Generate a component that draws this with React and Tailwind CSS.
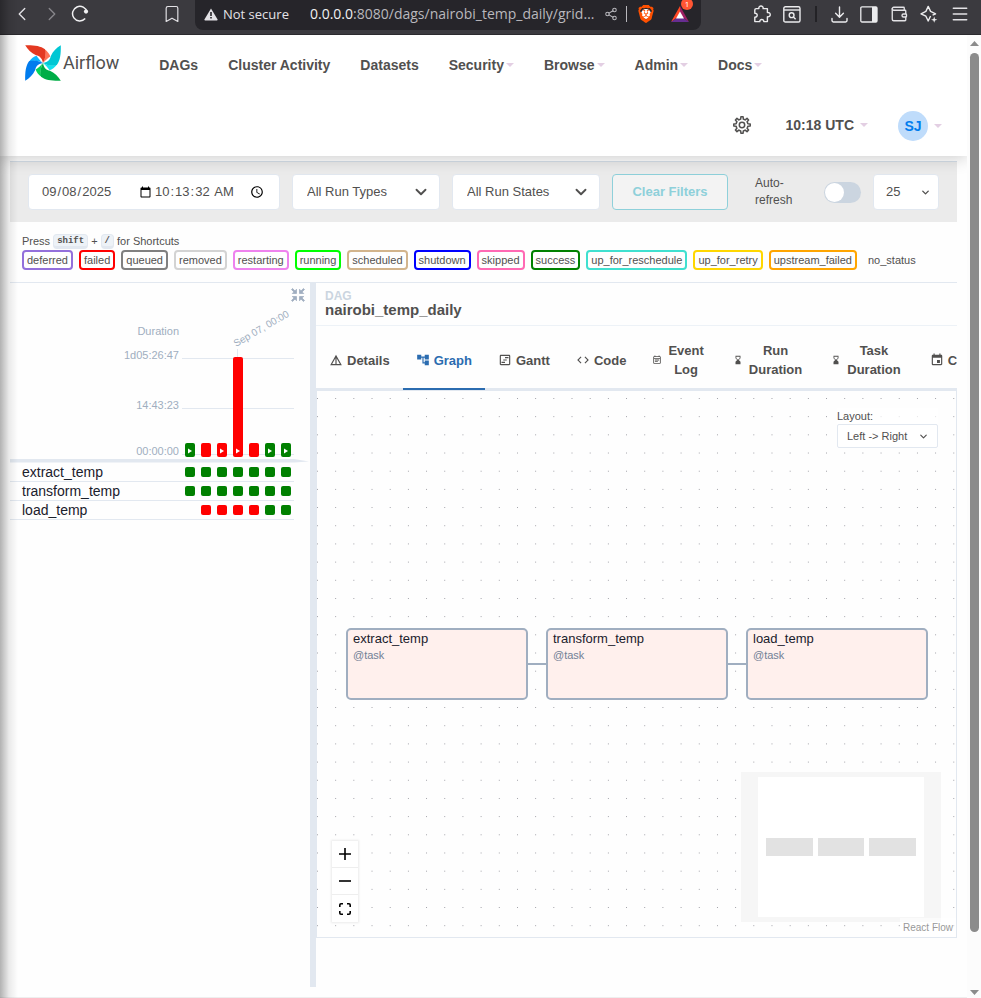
import React from "react";
import {
  ChevronLeft,
  ChevronRight,
  ChevronDown,
  Bookmark,
  Share2,
  Wallet,
  Menu,
} from "lucide-react";
import {
  MdDetails,
  MdAccountTree,
  MdOutlineViewTimeline,
  MdCode,
  MdOutlineEventNote,
  MdHourglassBottom,
  MdEvent,
} from "react-icons/md";
import { SiBrave } from "react-icons/si";
import { BiCollapse } from "react-icons/bi";

function ReloadIcon() {
  return (
    <svg width="18" height="18" viewBox="0 0 18 18" fill="none" stroke="#f1f1f3" strokeWidth="1.5">
      <path d="M14.2 13.6A7.3 7.3 0 1 1 16 7.2" />
      <circle cx="15" cy="6.6" r="2.1" fill="#f1f1f3" stroke="none" />
    </svg>
  );
}

function WarningIcon() {
  return (
    <svg width="14" height="13" viewBox="0 0 14 13">
      <path d="M7 0.6 13.6 11.6Q13.8 12.4 13 12.4H1Q0.2 12.4 0.4 11.6Z" fill="#e3e2e6" />
      <path d="M6.2 4h1.6v4H6.2zM6.2 9h1.6v1.6H6.2z" fill="#26252a" />
    </svg>
  );
}

function BatIcon() {
  return (
    <svg width="18" height="16" viewBox="0 0 18 16">
      <path d="M9 0 0 16 9 9.5Z" fill="#ff4724" />
      <path d="M9 0 18 16 9 9.5Z" fill="#9e1f63" />
      <path d="M0 16H18L9 9.5Z" fill="#662d91" />
      <path d="M9 5.500 13 12.400H5Z" fill="#fff" />
    </svg>
  );
}

function PuzzleIcon() {
  return (
    <svg width="18" height="18" viewBox="0 0 18 18" fill="none" stroke="#ececee" strokeWidth="1.4" strokeLinejoin="round">
      <path d="M3.2 3.6H5.9C5.3 0.1 10.7 0.1 10.1 3.6H14.4V7.6C18.2 7 18.2 12.4 14.4 11.8V16.6H10.8C11 13.8 6.6 13.8 6.8 16.6H1.8V12.2C5 12.4 5 8 1.8 8.2V5Q1.8 3.6 3.2 3.6Z" />
    </svg>
  );
}

function FindPageIcon() {
  return (
    <svg width="18" height="17" viewBox="0 0 18 17" fill="none" stroke="#ececee" strokeWidth="1.4">
      <rect x="0.8" y="0.8" width="16.2" height="15.2" rx="1.6" />
      <path d="M1 4H17" />
      <circle cx="8.6" cy="9.2" r="2.4" />
      <path d="M10.4 11 12.6 13.2" />
    </svg>
  );
}

function TrayIcon() {
  return (
    <svg width="17" height="17" viewBox="0 0 17 17" fill="none" stroke="#ececee" strokeWidth="1.4" strokeLinecap="round" strokeLinejoin="round">
      <path d="M8.5 1V11M4.6 7.3 8.5 11.2 12.4 7.3M1 12.5V14.6Q1 16 2.4 16H14.6Q16 16 16 14.6V12.5" />
    </svg>
  );
}

function SideBarIcon() {
  return (
    <svg width="18" height="17" viewBox="0 0 18 17">
      <rect x="0.8" y="0.8" width="16.2" height="15.2" rx="1.2" fill="none" stroke="#ececee" strokeWidth="1.3" />
      <rect x="12" y="1" width="5" height="15" fill="#ececee" />
    </svg>
  );
}

function LeoIcon() {
  return (
    <svg width="18" height="18" viewBox="0 0 18 18" fill="none" stroke="#ececee" strokeWidth="1.4" strokeLinejoin="round">
      <path d="M10.6 11 8.2 16 5.9 11.2 1 8.8 5.9 6.4 8.2 1.4 10.6 6.4 15.6 8.8 12.6 10.2" />
      <path d="M14.2 11.6 15 14 17.4 14.8 15 15.6 14.2 17.8 13.4 15.6 11 14.8 13.4 14Z" fill="#ececee" stroke="none" />
    </svg>
  );
}

function PinwheelLogo() {
  const blades = [
    { angle: 0, dark: "#e43921", light: "#ff7557" },
    { angle: 90, dark: "#00c7d4", light: "#11e1ee" },
    { angle: 180, dark: "#00ad46", light: "#04d659" },
    { angle: 270, dark: "#017cee", light: "#0cb6ff" },
  ];
  return (
    <svg width="36" height="36" viewBox="0 0 36 36" aria-hidden="true">
      {blades.map((b) => (
        <g key={b.angle} transform={`rotate(${b.angle} 18 18)`}>
          <path d="M18 18C20.5 14 21 8 19.5 4.2C22.5 6 24.5 9 25.3 11.5C23 13 20 15.5 18 18Z" fill={b.light} />
          <path d="M0.2 0.2C9 0 15.5 0.8 20 4.2C21.3 9 20.3 14 18 18C17 12.5 14.5 11 11 10.2C6 7.8 2.8 4.5 0.2 0.2Z" fill={b.dark} />
        </g>
      ))}
    </svg>
  );
}

const gearPath = (() => {
  const points = [];
  const teeth = 8;
  const steps = [
    [-0.5, 6],
    [-0.28, 6],
    [-0.17, 8.3],
    [0.17, 8.3],
    [0.28, 6],
  ];
  for (let i = 0; i < teeth; i += 1) {
    steps.forEach(([offset, radius]) => {
      const a = ((i + offset) / teeth) * Math.PI * 2;
      points.push(`${(9 + radius * Math.sin(a)).toFixed(2)} ${(9 - radius * Math.cos(a)).toFixed(2)}`);
    });
  }
  return `M${points.join("L")}Z`;
})();

function GearIcon() {
  return (
    <svg width="18" height="18" viewBox="0 0 18 18" fill="none" stroke="#51504f" strokeWidth="1.5" strokeLinejoin="round">
      <path d={gearPath} />
      <circle cx="9" cy="9" r="2.7" />
    </svg>
  );
}

function Caret() {
  return (
    <svg width="8" height="4" viewBox="0 0 8 4" aria-hidden="true">
      <path d="M0 0H8L4 4Z" fill="#e3cfe3" />
    </svg>
  );
}

function BrowserBar() {
  return (
    <header className="flex h-[35px] shrink-0 items-start border-b border-[#2b2a2e] bg-[#3b3a3f] font-['Open_Sans','Noto_Sans',sans-serif] text-sm text-[#e3e2e6]">
      <div className="flex h-7 items-center gap-2 pl-[11px]">
        <button type="button" aria-label="Back"><ChevronLeft size={22} strokeWidth={1.5} /></button>
        <button type="button" aria-label="Forward" className="text-[#87868b]"><ChevronRight size={22} strokeWidth={1.5} /></button>
        <button type="button" aria-label="Reload"><ReloadIcon /></button>
      </div>
      <button type="button" aria-label="Bookmark" className="ml-[73px] flex h-7 items-center"><Bookmark size={20} strokeWidth={1.4} /></button>
      <div className="ml-[13px] flex h-[30px] w-[506px] items-center rounded-b-lg bg-[#26252a] pb-[2px] pl-[9px]">
        <WarningIcon />
        <span className="ml-[5px] w-[87px] whitespace-nowrap text-[13px]">Not secure</span>
        <span className="w-[290px] whitespace-nowrap text-sm text-[#b9b8bd]">
          <span className="text-[#f1f1f3]">0.0.0.0</span>:8080/dags/nairobi_temp_daily/grid…
        </span>
        <button type="button" aria-label="Share" className="ml-1 text-[#b9b8bd]"><Share2 size={14} strokeWidth={1.8} /></button>
        <span className="ml-2 h-4 w-px bg-[#b9b8bd]" />
        <button type="button" aria-label="Shields" className="relative ml-[10px] text-[#ff5000]">
          <span className="absolute inset-1 rounded-full bg-white" />
          <SiBrave size={18} className="relative" />
        </button>
        <button type="button" aria-label="Rewards" className="relative ml-4">
          <BatIcon />
          <span className="absolute -top-2 left-[10px] flex size-3 items-center justify-center rounded-full bg-[#ff5533] text-[8px] text-white">1</span>
        </button>
      </div>
      <div className="ml-auto flex h-7 items-center gap-3 pr-[11px]">
        <button type="button" aria-label="Extensions"><PuzzleIcon /></button>
        <button type="button" aria-label="Search page"><FindPageIcon /></button>
        <span className="mx-[2px] h-4 w-[2px] bg-[#232226]" />
        <button type="button" aria-label="Downloads"><TrayIcon /></button>
        <button type="button" aria-label="Sidebar"><SideBarIcon /></button>
        <button type="button" aria-label="Wallet"><Wallet size={18} strokeWidth={1.8} /></button>
        <button type="button" aria-label="Assistant"><LeoIcon /></button>
        <button type="button" aria-label="Menu"><Menu size={20} strokeWidth={1.8} /></button>
      </div>
    </header>
  );
}

const navItems = [
  { label: "DAGs" },
  { label: "Cluster Activity" },
  { label: "Datasets" },
  { label: "Security", menu: true },
  { label: "Browse", menu: true },
  { label: "Admin", menu: true },
  { label: "Docs", menu: true },
];

function NavBar() {
  return (
    <nav className="relative z-10 bg-white text-sm font-bold shadow-[0_2px_16px_rgba(0,0,0,0.2)]">
      <div className="flex h-[60px] items-center gap-[30px] pl-[25px]">
        <a href="#home" className="mr-[10px] flex items-center gap-[2px] pb-1 font-['Roboto',sans-serif] text-lg leading-9 font-normal">
          <PinwheelLogo />
          Airflow
        </a>
        {navItems.map((item) => (
          <a key={item.label} href={`#${item.label}`} className="flex items-center gap-[2px] whitespace-nowrap">
            {item.label}
            {item.menu && <Caret />}
          </a>
        ))}
      </div>
      <div className="flex h-[61px] items-center justify-end pr-[25px]">
        <button type="button" aria-label="Settings" className="pb-[2px]"><GearIcon /></button>
        <button type="button" className="ml-[35px] flex items-center gap-[6px] pb-[2px]">10:18 UTC <Caret /></button>
        <button type="button" className="ml-[30px] flex items-center gap-[6px]">
          <span className="flex size-[30px] items-center justify-center rounded-full bg-[#bfdcfb] text-[#017cee]">SJ</span>
          <Caret />
        </button>
      </div>
    </nav>
  );
}

function FilterSelect({ label }) {
  return (
    <div className="relative">
      <select aria-label={label} className="h-9 w-[148px] appearance-none rounded border border-[#e2e8f0] bg-white pl-[14px] text-[13px]">
        <option>{label}</option>
      </select>
      <ChevronDown size={18} strokeWidth={2.5} className="pointer-events-none absolute top-[9px] right-[10px]" />
    </div>
  );
}

function FilterBar() {
  return (
    <div className="flex items-center gap-3 border-t border-[#d5dee8] bg-[#ebebeb] px-[18px] py-3 text-[13px]">
      <div className="flex h-9 w-[252px] items-center rounded border border-[#e2e8f0] bg-white pl-3">
        <input type="date" aria-label="Base date" defaultValue="2025-09-08" className="w-[113px]" />
        <input type="time" step="1" aria-label="Base time" defaultValue="10:13:32" className="w-[113px]" />
      </div>
      <FilterSelect label="All Run Types" />
      <FilterSelect label="All Run States" />
      <button type="button" className="h-9 w-[116px] rounded border border-[#8ed0da] bg-[#f3f3f3] font-bold text-[#8ed0da]">Clear Filters</button>
      <div className="ml-auto flex items-center gap-3">
        <label htmlFor="auto-refresh" className="w-[57px] text-xs leading-[17px]">Auto-<br />refresh</label>
        <input
          id="auto-refresh"
          type="checkbox"
          role="switch"
          className="h-[21px] w-[37px] appearance-none rounded-full bg-[#cbd5e0] p-[1px] before:block before:size-[19px] before:rounded-full before:bg-white"
        />
        <div className="relative">
          <select aria-label="Number of runs" className="h-9 w-[66px] appearance-none rounded border border-[#e2e8f0] bg-white pl-3">
            <option>25</option>
          </select>
          <ChevronDown size={11} strokeWidth={3} className="pointer-events-none absolute top-[13px] right-2" />
        </div>
      </div>
    </div>
  );
}

const states = [
  { name: "deferred", border: "border-[#9370db]" },
  { name: "failed", border: "border-[#ff0000]" },
  { name: "queued", border: "border-[#808080]" },
  { name: "removed", border: "border-[#d3d3d3]" },
  { name: "restarting", border: "border-[#ee82ee]" },
  { name: "running", border: "border-[#00ff00]" },
  { name: "scheduled", border: "border-[#d2b48c]" },
  { name: "shutdown", border: "border-[#0000ff]" },
  { name: "skipped", border: "border-[#ff69b4]" },
  { name: "success", border: "border-[#008000]" },
  { name: "up_for_reschedule", border: "border-[#40e0d0]" },
  { name: "up_for_retry", border: "border-[#ffd700]" },
  { name: "upstream_failed", border: "border-[#ffa500]" },
  { name: "no_status", border: "border-transparent" },
];

function Key({ children }) {
  return (
    <kbd className="rounded border border-b-[3px] border-[#e2e8f0] bg-[#edf2f7] px-[3px] pt-px font-['Liberation_Mono',monospace] text-[9px] leading-[10px] font-bold">
      {children}
    </kbd>
  );
}

function Legend() {
  return (
    <div className="border-b border-[#e2e8f0] px-3 pt-[11px] pb-3 text-[11px]">
      <p className="flex h-[17px] items-center gap-[3px] pb-px">
        Press <Key>shift</Key> + <Key>/</Key> for Shortcuts
      </p>
      <ul className="flex gap-[6px]">
        {states.map((s) => (
          <li key={s.name} className={`rounded border-2 px-[3px] leading-4 whitespace-nowrap ${s.border}`}>{s.name}</li>
        ))}
      </ul>
    </div>
  );
}

const runs = [
  { top: 160, state: "success", arrow: true },
  { top: 160, state: "failed", arrow: false },
  { top: 160, state: "failed", arrow: true },
  { top: 74, state: "failed", arrow: true },
  { top: 160, state: "failed", arrow: false },
  { top: 160, state: "success", arrow: true },
  { top: 160, state: "success", arrow: true },
];

function DurationChart() {
  return (
    <svg width="300" height="180" viewBox="0 0 300 180" className="block font-['Liberation_Sans',Arial,sans-serif] text-[11px]">
      <g stroke="#e2e8f0" strokeWidth="1">
        <path d="M172 75.5H284M172 125.5H284M172 171.5H284M227.5 66V75" />
      </g>
      <g fill="#a0aec0" textAnchor="end">
        <text x="169" y="52">Duration</text>
        <text x="169" y="76">1d05:26:47</text>
        <text x="169" y="126">14:43:23</text>
        <text x="169" y="172">00:00:00</text>
      </g>
      <text fill="#a0aec0" className="text-[10px]" transform="translate(226 64) rotate(-30)">Sep 07, 00:00</text>
      {runs.map((run, i) => (
        <g key={i}>
          <rect x={175 + i * 16} y={run.top} width="10" height={174 - run.top} rx="2" fill={run.state === "success" ? "#008000" : "#ff0000"} />
          {run.arrow && <path d={`M${178 + i * 16} 165.5v5l4-2.5z`} fill="#fff" />}
        </g>
      ))}
      <path d="M0 176H284L299 178.5L284 179.5H0Z" fill="#e2e8f0" />
    </svg>
  );
}

const tasks = [
  { id: "extract_temp", runs: "sssssss" },
  { id: "transform_temp", runs: "sssssss" },
  { id: "load_temp", runs: "-ffffss" },
];

const squareColor = { s: "bg-[#008000]", f: "bg-[#ff0000]", "-": "bg-transparent" };

function GridPanel() {
  return (
    <section className="w-[300px] shrink-0">
      <div className="relative">
        <DurationChart />
        <button type="button" aria-label="Collapse details" className="absolute top-[3px] right-[3px] text-[#a0aec0]"><BiCollapse size={18} strokeWidth={1} /></button>
      </div>
      <table className="w-[284px] border-separate border-spacing-0 text-sm text-[#1a202c]">
        <tbody>
          {tasks.map((t) => (
            <tr key={t.id}>
              <th scope="row" className="border-b border-[#e2e8f0] p-0 pl-3 text-left leading-[18px] font-normal">{t.id}</th>
              {t.runs.split("").map((r, i) => (
                <td key={i} className="w-4 border-b border-[#e2e8f0] p-0 px-[3px]"><span className={`block size-[10px] rounded-[2px] ${squareColor[r]}`} /></td>
              ))}
            </tr>
          ))}
        </tbody>
      </table>
    </section>
  );
}

const tabs = [
  { label: "Details", Icon: MdDetails },
  { label: "Graph", Icon: MdAccountTree, active: true },
  { label: "Gantt", Icon: MdOutlineViewTimeline },
  { label: "Code", Icon: MdCode },
  { label: "Event Log", Icon: MdOutlineEventNote, small: true },
  { label: "Run Duration", Icon: MdHourglassBottom, small: true },
  { label: "Task Duration", Icon: MdHourglassBottom, small: true },
  { label: "Calendar", Icon: MdEvent },
];

function Tabs() {
  return (
    <div role="tablist" className="flex h-[65px] overflow-hidden pb-px text-[13px] leading-[19px] font-bold shadow-[inset_0_-3px_0_#e2e8f0]">
      {tabs.map(({ label, Icon, active, small }) => (
        <button
          key={label}
          type="button"
          role="tab"
          aria-selected={active ? "true" : "false"}
          className={`flex shrink-0 items-center gap-1 border-b-2 px-[13px] pt-[6px] ${active ? "border-[#2b6cb0] text-[#2b6cb0]" : "border-transparent"}`}
        >
          <Icon size={small ? 10 : 14} className="shrink-0" />
          {small ? (
            <span className="pr-[3px] pl-[2px]">{label.split(" ")[0]}<br />{label.split(" ")[1]}</span>
          ) : (
            label
          )}
        </button>
      ))}
    </div>
  );
}

const nodes = [
  { id: "extract_temp", place: "left-[29px]" },
  { id: "transform_temp", place: "left-[229px]" },
  { id: "load_temp", place: "left-[429px]" },
];

function FlowCanvas() {
  return (
    <div className="relative min-h-[500px] flex-1 overflow-hidden border border-t-0 border-[#e2e8f0]">
      <svg className="absolute inset-0 size-full" aria-hidden="true">
        <defs>
          <pattern id="dots" x="0" y="7" width="18.18" height="18.18" patternUnits="userSpaceOnUse">
            <circle cx="0.5" cy="0.5" r="0.5" fill="#81818a" />
          </pattern>
        </defs>
        <rect width="100%" height="100%" fill="url(#dots)" />
        <path d="M211 273H229M411 273H429" stroke="#a0aec0" strokeWidth="2" />
      </svg>
      {nodes.map((n) => (
        <div key={n.id} className={`absolute top-[237px] h-[72px] w-[182px] rounded-[5px] border-2 border-[#a0aec0] bg-[#fff0ed] px-[5px] ${n.place}`}>
          <p className="text-[13px] leading-[18px] text-[#1a202c]">{n.id}</p>
          <p className="text-[11px] leading-[14px] text-[#718096]">@task</p>
        </div>
      ))}
      <div className="absolute top-[17px] right-[18px] w-[101px] bg-white/70">
        <label htmlFor="layout" className="block text-[11px] leading-4">Layout:</label>
        <div className="relative">
          <select id="layout" className="block h-6 w-full appearance-none rounded-[2px] border border-[#e2e8f0] bg-white pl-[9px] text-[11px]">
            <option>Left -&gt; Right</option>
          </select>
          <ChevronDown size={11} strokeWidth={2.5} className="pointer-events-none absolute top-[7px] right-[9px]" />
        </div>
      </div>
      <div className="absolute bottom-[15px] left-[15px] flex flex-col bg-white text-black shadow-[0_0_2px_1px_rgba(0,0,0,0.08)]">
        <button type="button" aria-label="Zoom in" className="flex h-[27px] w-[26px] items-center justify-center border-b border-[#eee]">
          <svg width="12" height="12" viewBox="0 0 12 12"><path d="M0 6H12M6 0V12" stroke="currentColor" strokeWidth="1.6" /></svg>
        </button>
        <button type="button" aria-label="Zoom out" className="flex h-[27px] w-[26px] items-center justify-center border-b border-[#eee]">
          <svg width="12" height="12" viewBox="0 0 12 12"><path d="M0 6H12" stroke="currentColor" strokeWidth="1.6" /></svg>
        </button>
        <button type="button" aria-label="Fit view" className="flex h-[27px] w-[26px] items-center justify-center">
          <svg width="12" height="12" viewBox="0 0 12 12" fill="none" stroke="currentColor" strokeWidth="1.6">
            <path d="M0.8 4V2Q0.8 0.8 2 0.8H4M8 0.8H10Q11.2 0.8 11.2 2V4M11.2 8V10Q11.2 11.2 10 11.2H8M4 11.2H2Q0.8 11.2 0.8 10V8" />
          </svg>
        </button>
      </div>
      <svg className="absolute right-[15px] bottom-[15px] bg-white" width="200" height="150" viewBox="0 0 200 150" aria-label="Mini map">
        <path d="M25 66H72V84H25ZM77 66H123V84H77ZM128 66H175V84H128Z" fill="#e2e2e2" />
        <path d="M0 0H200V150H0ZM17 5V145H183V5Z" fill="#f0f0f0" fillOpacity="0.6" fillRule="evenodd" />
      </svg>
      <a href="#reactflow" className="absolute right-0 bottom-0 bg-white/50 px-[3px] pt-[2px] pb-px text-[10px] leading-4 text-[#999]">React Flow</a>
    </div>
  );
}

function DetailsPanel() {
  return (
    <section className="flex min-w-0 flex-1 flex-col pb-[49px]">
      <div className="border-b border-[#edf2f7] pt-[7px] pb-2 pl-[9px] font-bold">
        <p className="text-xs leading-3 text-[#cbd5e0]">DAG</p>
        <h1 className="text-[15px] leading-[15px]">nairobi_temp_daily</h1>
      </div>
      <Tabs />
      <FlowCanvas />
    </section>
  );
}

function ScrollBar() {
  return (
    <div aria-hidden="true" className="flex w-[14px] shrink-0 flex-col items-center bg-[#fcfcfc] pt-[6px] pb-[3px] pl-px">
      <svg width="9" height="5" viewBox="0 0 9 5"><path d="M0 5H9L4.5 0Z" fill="#8b8b8b" /></svg>
      <div className="mt-[7px] mb-[58px] w-[9px] flex-1 rounded-full bg-[#8b8b8b]" />
      <svg width="9" height="5" viewBox="0 0 9 5"><path d="M0 0H9L4.5 5Z" fill="#8b8b8b" /></svg>
    </div>
  );
}

export default function App() {
  return (
    <div className="relative flex min-h-screen flex-col bg-[#fefefe] font-['Liberation_Sans',Arial,sans-serif] text-[#51504f]">
      <BrowserBar />
      <div className="flex flex-1">
        <div className="flex min-w-0 flex-1 flex-col overflow-hidden border-b border-[#eee]">
          <NavBar />
          <main className="flex flex-1 flex-col px-[10px] pt-[5px] pb-[10px]">
            <FilterBar />
            <Legend />
            <div className="flex flex-1">
              <GridPanel />
              <div className="w-[6px] shrink-0 bg-[#e2e8f0]" />
              <DetailsPanel />
            </div>
          </main>
        </div>
        <ScrollBar />
      </div>
      <div className="pointer-events-none absolute inset-y-0 left-0 z-20 w-[18px] bg-linear-to-r from-black/30 via-black/8 to-transparent" />
    </div>
  );
}
